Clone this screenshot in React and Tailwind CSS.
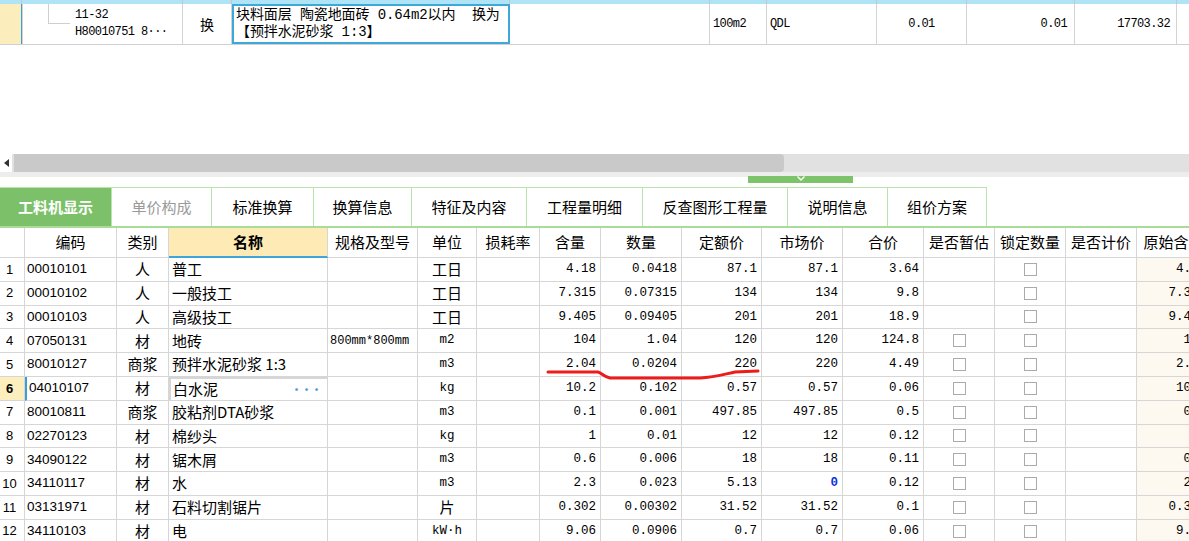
import React from 'react';

const cjk = "font-['Noto_Sans_CJK_SC',sans-serif]";
const mono = "font-['Liberation_Mono','Noto_Sans_CJK_SC',monospace]";
const sans = "font-['Liberation_Sans','Noto_Sans_CJK_SC',sans-serif]";

const gridCols = "grid grid-cols-[25px_92px_52px_159px_90px_59px_63px_61px_81px_80px_81px_81px_71px_71px_71px_74px]";
const topCols = "grid grid-cols-[22px_161px_49px_278px_200px_57px_110px_90px_108px_102px_40px]";

const tabs = [
    { label: '工料机显示', w: 'w-[112px]', active: true },
    { label: '单价构成', w: 'w-[100px]', dim: true },
    { label: '标准换算', w: 'w-[102px]' },
    { label: '换算信息', w: 'w-[98px]' },
    { label: '特征及内容', w: 'w-[115px]' },
    { label: '工程量明细', w: 'w-[116px]' },
    { label: '反查图形工程量', w: 'w-[145px]' },
    { label: '说明信息', w: 'w-[100px]' },
    { label: '组价方案', w: 'w-[99px]' },
];

const headers = ['', '编码', '类别', '名称', '规格及型号', '单位', '损耗率', '含量', '数量', '定额价', '市场价', '合价', '是否暂估', '锁定数量', '是否计价', '原始含量'];

// [code, type, name, spec, unit, qty, amount, quota, market, total, est, orig]
const rows = [
    ['00010101', '人', '普工', '', '工日', '4.18', '0.0418', '87.1', '87.1', '3.64', false, '4.18'],
    ['00010102', '人', '一般技工', '', '工日', '7.315', '0.07315', '134', '134', '9.8', false, '7.315'],
    ['00010103', '人', '高级技工', '', '工日', '9.405', '0.09405', '201', '201', '18.9', false, '9.405'],
    ['07050131', '材', '地砖', '800mm*800mm', 'm2', '104', '1.04', '120', '120', '124.8', true, '104'],
    ['80010127', '商浆', '预拌水泥砂浆 1:3', '', 'm3', '2.04', '0.0204', '220', '220', '4.49', true, '2.04'],
    ['04010107', '材', '白水泥', '', 'kg', '10.2', '0.102', '0.57', '0.57', '0.06', true, '10.2'],
    ['80010811', '商浆', '胶粘剂DTA砂浆', '', 'm3', '0.1', '0.001', '497.85', '497.85', '0.5', true, '0.1'],
    ['02270123', '材', '棉纱头', '', 'kg', '1', '0.01', '12', '12', '0.12', true, '1'],
    ['34090122', '材', '锯木屑', '', 'm3', '0.6', '0.006', '18', '18', '0.11', true, '0.6'],
    ['34110117', '材', '水', '', 'm3', '2.3', '0.023', '5.13', '0', '0.12', true, '2.3'],
    ['03131971', '材', '石料切割锯片', '', '片', '0.302', '0.00302', '31.52', '31.52', '0.1', true, '0.302'],
    ['34110103', '材', '电', '', 'kW·h', '9.06', '0.0906', '0.7', '0.7', '0.06', true, '9.06'],
];

const cell = "h-[23.8px] border-r border-b border-[#d6d6d6] flex items-center overflow-hidden whitespace-nowrap";
const num = `${cell} justify-end pr-[4px] text-[12.5px] ${mono}`;

function Checkbox() {
    return <div className="w-[13px] h-[13px] border border-[#ababab] bg-white" />;
}

function TopRow() {
    const c = "border-r border-[#d4d4d4] flex items-center overflow-hidden whitespace-nowrap";
    return (
        <>
            <div className={`${topCols} h-[4px] bg-[#afe3f6]`}>
                {Array.from({ length: 11 }).map((_, i) => (
                    <div key={i} className="border-r border-[#c6c6c6]" />
                ))}
            </div>
            <div className={`${topCols} h-[41px] border-b border-[#d0d0d0] text-[12px] tracking-[-0.6px] text-black ${mono}`}>
                <div className="bg-[#fcedbd] border-r border-[#3a9fd6]" />
                <div className={`${c} border-l border-[#3a9fd6] items-stretch`}>
                    <div className="ml-[25px] w-[22px] h-[20px] border-l border-b border-[#cfcfcf]" />
                    <div className="ml-[5px] flex flex-col justify-center leading-[17px]">
                        <span>11-32</span>
                        <span>H80010751 8···</span>
                    </div>
                </div>
                <div className={`${c} justify-center text-[14px] tracking-normal ${cjk}`}>换</div>
                <div className="border-2 border-[#3ea8db] flex flex-col justify-center pl-[2px] text-[14px] leading-[17px] tracking-[-0.1px] whitespace-pre overflow-hidden">
                    <span>块料面层 陶瓷地面砖 0.64m2以内  换为</span>
                    <span>【预拌水泥砂浆 1:3】</span>
                </div>
                <div className={c} />
                <div className={`${c} pl-[3px]`}>100m2</div>
                <div className={`${c} pl-[3px]`}>QDL</div>
                <div className={`${c} justify-center`}>0.01</div>
                <div className={`${c} justify-end pr-[7px]`}>0.01</div>
                <div className={`${c} justify-end pr-[6px]`}>17703.32</div>
                <div />
            </div>
        </>
    );
}

function Scrollbar() {
    return (
        <div className="flex flex-col">
            <div className="h-[18px] flex bg-[#e1e1e1]">
                <div className="w-[12px] bg-white flex items-center justify-center">
                    <svg width="5" height="8" viewBox="0 0 5 8"><path d="M5 0 L0 4 L5 8 Z" fill="#333" /></svg>
                </div>
                <div className="ml-[2px] w-[770px] bg-[#c9c9c9] rounded-r-[4px]" />
            </div>
            <div className="h-[5px] bg-[#ededed]" />
            <div className="h-[10px] flex">
                <div className="ml-[748px] mt-[-1px] w-[105px] h-[7px] bg-[#7cc36a] flex items-start justify-center">
                    <svg width="10" height="6" viewBox="0 0 10 6"><path d="M1.5 0.5 L5 4 L8.5 0.5" stroke="#fff" strokeWidth="1.4" fill="none" /></svg>
                </div>
            </div>
        </div>
    );
}

function TabBar() {
    return (
        <div className={`flex h-[41px] border-b-2 border-[#a9dc98] ${cjk}`}>
            {tabs.map((t) => (
                <div
                    key={t.label}
                    className={`${t.w} flex items-center justify-center text-[15px] border-t border-r border-[#b9e4ab] ${t.active ? 'bg-[#7cc16a] text-white font-bold' : t.dim ? 'text-[#9a9a9a]' : 'text-black'}`}
                >
                    {t.label}
                </div>
            ))}
        </div>
    );
}

function MaterialTable() {
    return (
        <div className={`${gridCols} w-[1211px] text-black`}>
            {headers.map((h, i) => (
                <div
                    key={i}
                    className={`h-[30px] border-r border-b border-[#d6d6d6] flex items-center justify-center whitespace-nowrap overflow-hidden text-[15px] ${cjk} ${i === 3 ? 'bg-[#fdeab4] font-bold border-b-2 border-b-[#3ea5dc]' : 'bg-white'}`}
                >
                    {h}
                </div>
            ))}
            {rows.map((r, idx) => {
                const n = idx + 1;
                const sel = n === 6;
                return (
                    <React.Fragment key={n}>
                        <div className={`${cell} justify-center pr-[5px] text-[13px] ${sans} ${sel ? 'bg-[#fdeebd] font-bold' : ''}`}>{n}</div>
                        <div className={`${cell} pl-[2px] text-[13.5px] ${sans} ${sel ? 'border-l-2 border-l-[#3a9fd6]' : ''}`}>{r[0]}</div>
                        <div className={`${cell} justify-center text-[15px] ${cjk}`}>{r[1]}</div>
                        {sel ? (
                            <div className={`${cell} border-2 border-[#707070] pl-[2px] pr-[6px] justify-between text-[15px] ${cjk}`}>
                                <span>{r[2]}</span>
                                <span className="text-[#5b9bd8] text-[11px] font-bold tracking-[-1px]">···</span>
                            </div>
                        ) : (
                            <div className={`${cell} pl-[3px] text-[15px] ${cjk}`}>{r[2]}</div>
                        )}
                        <div className={`${cell} pl-[2px] text-[12px] ${mono}`}>{r[3]}</div>
                        <div className={`${cell} justify-center ${/^[a-zA-Z]/.test(r[4]) ? `text-[12.5px] ${mono}` : `text-[15px] ${cjk}`}`}>{r[4]}</div>
                        <div className={cell} />
                        <div className={num}>{r[5]}</div>
                        <div className={num}>{r[6]}</div>
                        <div className={num}>{r[7]}</div>
                        <div className={`${num} ${n === 10 ? 'text-[#1030e0] font-bold' : ''}`}>{r[8]}</div>
                        <div className={num}>{r[9]}</div>
                        <div className={`${cell} justify-center`}>{r[10] && <Checkbox />}</div>
                        <div className={`${cell} justify-center`}><Checkbox /></div>
                        <div className={cell} />
                        <div className={`${num} bg-[#fdf9f1]`}>{r[11]}</div>
                    </React.Fragment>
                );
            })}
        </div>
    );
}

export default function App() {
    return (
        <div className="relative w-[1189px] h-[541px] overflow-hidden bg-white">
            <TopRow />
            <div className="h-[109px]" />
            <Scrollbar />
            <TabBar />
            <MaterialTable />
            <svg className="absolute left-0 top-0 pointer-events-none" width="1189" height="541">
                <path
                    d="M548 372 L598 372 C602 373 604 377 610 378 L700 378 C715 377 725 374 735 372 L758 371"
                    stroke="#ee1b1b"
                    strokeWidth="3"
                    strokeLinecap="round"
                    fill="none"
                />
            </svg>
        </div>
    );
}
